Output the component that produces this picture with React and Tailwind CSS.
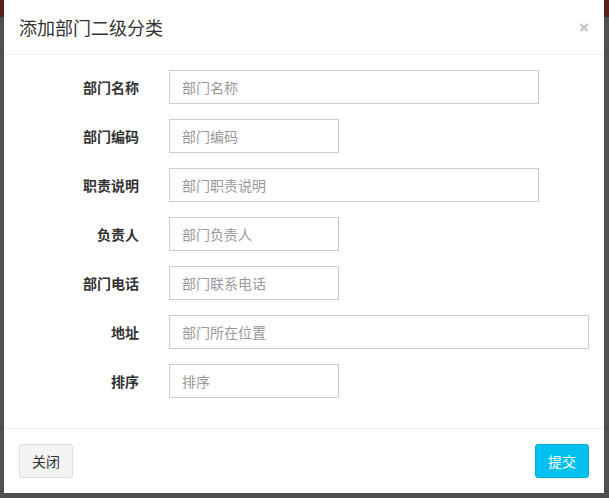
export default function App() {
  const rows = [
    ["部门名称", "部门名称", "w-[370px]"],
    ["部门编码", "部门编码", "w-[170px]"],
    ["职责说明", "部门职责说明", "w-[370px]"],
    ["负责人", "部门负责人", "w-[170px]"],
    ["部门电话", "部门联系电话", "w-[170px]"],
    ["地址", "部门所在位置", "w-[420px]"],
    ["排序", "排序", "w-[170px]"],
  ];
  return (
    <div
      className="w-[609px] h-[498px] bg-[#4f4f4f] relative overflow-hidden"
      style={{ fontFamily: '"Noto Sans CJK SC", "Liberation Sans", sans-serif' }}
    >
      <div className="h-[17px] bg-[#5a1e18]" />
      <div className="absolute left-[4px] top-0 w-[600px] h-[493px] bg-white flex flex-col">
        <div className="h-[55px] border-b border-[#eeeeee] flex items-center justify-between px-[15px]">
          <div className="text-[18px] text-[#333]">添加部门二级分类</div>
          <div className="text-[17px] text-[#c0c0c0] font-bold leading-none" style={{ fontFamily: '"Liberation Sans", sans-serif' }}>×</div>
        </div>
        <div className="flex-1 pt-[15px] flex flex-col gap-[15px]">
          {rows.map(([l, p, w]) => (
            <div key={l} className="flex items-center">
              <div className="w-[135px] text-right text-[14px] font-bold text-[#333]">{l}</div>
              <div className={`ml-[30px] h-[34px] ${w} border border-[#ccccd6] flex items-center px-[12px] text-[14px] text-[#999]`}>{p}</div>
            </div>
          ))}
        </div>
        <div className="h-[65px] border-t border-[#eeeeee] flex items-center justify-between px-[15px]">
          <div className="h-[34px] w-[54px] flex items-center justify-center border border-[#dddddd] bg-[#f4f4f4] rounded-[3px] text-[14px] text-[#333]">关闭</div>
          <div className="h-[34px] w-[54px] flex items-center justify-center bg-[#00c0ef] border border-[#00acd6] rounded-[3px] text-[14px] text-white">提交</div>
        </div>
      </div>
    </div>
  );
}
